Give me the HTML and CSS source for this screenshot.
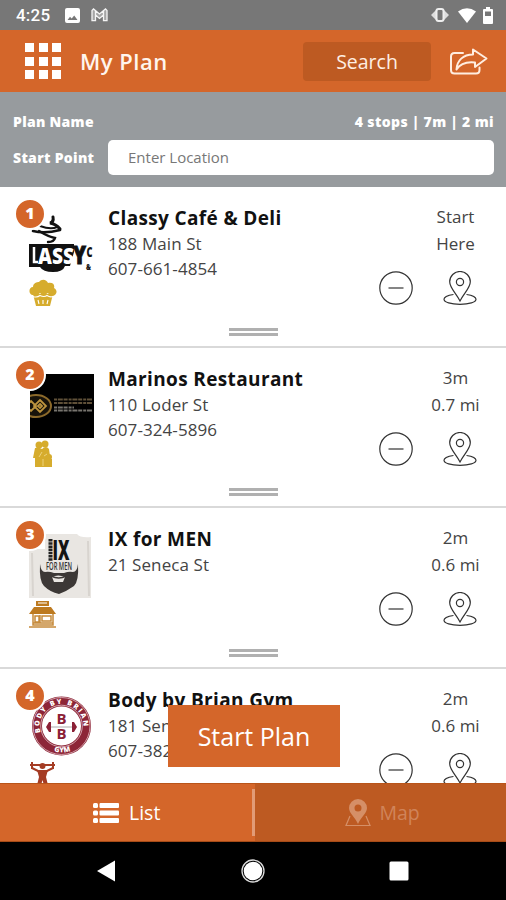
FILE: index.html
```html
<!DOCTYPE html>
<html lang="en">
<head>
<meta charset="utf-8">
<title>My Plan</title>
<link rel="stylesheet" href="styles.css">
</head>
<body>
<svg class="defs" aria-hidden="true">
  <symbol id="minus" viewBox="0 0 34 34"><circle cx="17" cy="17" r="16.2"/><path d="M9.500 17h15"/></symbol>
  <symbol id="pin" viewBox="0 0 34 34"><path d="M17 30C13 22 6.700 17 6.700 10.800a10.300 10.300 0 0 1 20.600 0C27.300 17 21 22 17 30z"/><circle cx="17" cy="11" r="3.600"/><path d="M10.500 23.500C4 24.200 1 26.500 1 28.300c0 3 7 5 16 5s16-2 16-5c0-1.800-3-4.100-9.500-4.800"/></symbol>
</svg>
<div class="screen">
  <div class="status">
    <span class="clock">4:25</span>
    <svg class="s-photo" viewBox="0 0 15 15"><path fill="#fff" fill-rule="evenodd" d="M2 0h11a2 2 0 0 1 2 2v11a2 2 0 0 1-2 2H2a2 2 0 0 1-2-2V2a2 2 0 0 1 2-2zM2.500 12h10L9.200 7.500 6.700 10.500 5 8.700z"/></svg>
    <svg class="s-mail" viewBox="0 0 17 14"><path d="M1 12.700V2.500L2.500 1 8.500 6 14.500 1 16 2.500v10.200h-3.500V7L8.500 10.500 4.500 7v5.700zM4.500 7V3M12.500 7V3" fill="#a5a5a5" stroke="#f4f4f4" stroke-width="1.300"/></svg>
    <span class="grow"></span>
    <svg class="s-vib" viewBox="0 0 18 14"><path d="M0 7l5-5v10zM18 7l-5-5v10z" fill="#ddd"/><rect x="5.500" y="1" width="7" height="12" rx="2" fill="#777" stroke="#eee" stroke-width="2"/></svg>
    <svg class="s-wifi" viewBox="0 0 18 15"><path fill="#fff" d="M0 3.500Q9-3 18 3.500L9 15z"/></svg>
    <svg class="s-bat" viewBox="0 0 10 17"><path fill="#fff" fill-rule="evenodd" d="M3 0h4v2h2q1 0 1 1v13q0 1-1 1H1q-1 0-1-1V3q0-1 1-1h2zM2 4.500v4.500h6V4.500z"/></svg>
  </div>

  <header class="header">
    <div class="grid-icon"><i></i><i></i><i></i><i></i><i></i><i></i><i></i><i></i><i></i></div>
    <h1>My Plan</h1>
    <button class="search">Search</button>
    <svg class="share" viewBox="0 0 38 27"><g fill="none" stroke="#ffede0" stroke-width="2" stroke-linejoin="round" stroke-linecap="round"><path d="M13 5H4.500Q1 5 1 8.500V22q0 3.500 3.500 3.500H26q3.500 0 3.500-3.500v-2.500"/><path d="M23 1.500L36.500 10.500 25 19V14.500C16 13.500 10 16 6.500 21.500 7 12.500 13 6.500 23 6.500z"/></g></svg>
  </header>

  <section class="plan">
    <div class="plan-row"><span>Plan Name</span><span class="totals">4 stops | 7m | 2 mi</span></div>
    <div class="plan-row start"><span class="label">Start Point</span><div class="field">Enter Location</div></div>
  </section>

  <main class="list">
    <article class="card">
      <div class="media">
        <svg class="thumb" viewBox="0 0 65 65"><g fill="none" stroke="#111" stroke-linecap="round"><path d="M4 18Q16 21 31 17" stroke-width="2.600"/><path d="M10 18Q20 24 26 25 25 29 19 29" stroke-width="2.400"/><path d="M11 13Q22 17 28 14" stroke-width="2"/><path d="M31 16Q27 11 21 10 25 9 24 4" stroke-width="3"/></g><path d="M0 31h45v8l-4 14h-5q-2 6-12 6t-13-5H0z" fill="#111"/><path d="M5 34v15h4" stroke="#fff" stroke-width="2.500" fill="none"/><g font-family="Open Sans, sans-serif" font-weight="800"><text x="9" y="51" font-size="23" fill="#fff" textLength="36" lengthAdjust="spacingAndGlyphs">ASS</text><text x="44" y="51" font-size="24" fill="#111" stroke="#111" textLength="13" lengthAdjust="spacingAndGlyphs">Y</text><text x="57.500" y="44" font-size="14" fill="#111" textLength="6" lengthAdjust="spacingAndGlyphs">C</text><text x="57" y="57" font-size="9" fill="#111" textLength="5" lengthAdjust="spacingAndGlyphs">&amp;</text></g></svg>
        <svg class="cat" viewBox="0 0 28 28"><path fill="#d6ac2d" d="M3 16C-1 14 0 8 4 8c0-4 4-5 6-5 3-4 8-2 9 1 5-1 7 2 6 5 4 2 3 7-1 8-3-1-4-1-5-3-3 2-6 2-8 0-3 3-5 2-8 2z"/><path fill="#d6ac2d" d="M4 15h20l-3 12H7z"/><path d="M4 17.500q4 1.500 7-1 4 2 7 0 3 2 6 1M9 21l1 4M14 21v4M19 21l-1 4" stroke="#fff" stroke-width="1.100" fill="none"/></svg>
        <span class="badge">1</span>
      </div>
      <div class="info"><h2>Classy Café &amp; Deli</h2><p>188 Main St</p><p>607-661-4854</p></div>
      <div class="side"><p>Start</p><p>Here</p><div class="acts"><svg><use href="#minus"/></svg><svg><use href="#pin"/></svg></div></div>
      <div class="handle"></div>
    </article>

    <article class="card">
      <div class="media">
        <svg class="thumb" viewBox="0 0 65 65"><path d="M1 0h64v64H1z" fill="#000"/><svg x="1" y="0" width="64" height="64"><ellipse cx="6" cy="32" rx="15" ry="11" fill="#18130a" stroke="#8b692a" stroke-width="2"/><g fill="none" stroke="#bd943e" stroke-width="1.800"><path d="M1 27l5 5-5 5-5-5zM10 26l6 6-6 6-6-6zM10 30l2 2-2 2-2-2z"/></g></svg><g stroke-width="1.800" stroke-dasharray="3 .8 5 .8 4 1"><path d="M25 25.500h38M25 29h38" stroke="#5f5038"/><path d="M25 33.500h20M25 36.500h38" stroke="#77746e"/></g></svg>
        <svg class="cat" viewBox="0 0 28 28"><g fill="#d6ac2d"><circle cx="10" cy="5" r="3.500"/><circle cx="16" cy="4" r="3.500"/><path d="M6 8q4-1 7 1 4-4 7 0l1 7h-3v11H6V18H4z"/><circle cx="20" cy="17" r="3"/><path d="M17 19h6v8h-6z"/></g><path d="M13 12l-3 5M14 19v7M18 14l-3 2" stroke="#f3dc91" fill="none" stroke-width=".8"/></svg>
        <span class="badge">2</span>
      </div>
      <div class="info"><h2>Marinos Restaurant</h2><p>110 Loder St</p><p>607-324-5896</p></div>
      <div class="side"><p>3m</p><p>0.7 mi</p><div class="acts"><svg><use href="#minus"/></svg><svg><use href="#pin"/></svg></div></div>
      <div class="handle"></div>
    </article>

    <article class="card">
      <div class="media">
        <svg class="thumb" viewBox="0 0 65 65"><path d="M0 15H16V0H48Q51 4 62 3L62 64H0z" fill="#e9e6e2"/><path d="M59 7l1 55M3 19l1 43" stroke="#d8d4cf" stroke-width="2"/><text x="23.500" y="26" textLength="17" lengthAdjust="spacingAndGlyphs" font-family="Open Sans, sans-serif" font-weight="800" font-size="28" fill="#141414">IX</text><path d="M21.500 5v22" stroke="#222" stroke-width="4" stroke-dasharray="2.500 .7"/><text x="17" y="36" textLength="26" lengthAdjust="spacingAndGlyphs" font-family="Open Sans, sans-serif" font-weight="600" font-size="10" fill="#333">FOR MEN</text><path fill="#3c3836" fill-rule="evenodd" d="M11 30q1 8 5 8 4-1 9 1l5 0 5 0q5-2 9-1 4 0 5-8 1 17-4 22-7 5-15 8-9-2-15-8-5-5-4-22zM23 43q6-3 13 0l-2 5h-9z"/><path d="M22 42q8 4 15 0" stroke="#3c3836" stroke-width="1.500" fill="none"/></svg>
        <svg class="cat" viewBox="0 0 28 28"><path d="M7 1h13v5H7z" fill="#bd7a20"/><path d="M9 3h9" stroke="#fff"/><path d="M5 7h17l5 7H0z" fill="#bd7a20"/><path d="M4 14v11h20V14M0 27h27M4 23h20M11 15v8M6 16h4v6H6zM13 16h9v5h-9z" fill="none" stroke="#c68b3b" stroke-width="1.500"/></svg>
        <span class="badge">3</span>
      </div>
      <div class="info"><h2>IX for MEN</h2><p>21 Seneca St</p></div>
      <div class="side"><p>2m</p><p>0.6 mi</p><div class="acts"><svg><use href="#minus"/></svg><svg><use href="#pin"/></svg></div></div>
      <div class="handle"></div>
    </article>

    <article class="card">
      <div class="media">
        <svg class="thumb" viewBox="0 0 65 65"><defs><path id="arc" d="M11.500 37.500A22 22 0 1 1 53.500 37.500"/><path id="arc2" d="M17 52.500A27.500 27.500 0 0 0 48 52.500"/></defs><circle cx="32.500" cy="31" r="24.500" fill="#fff" stroke="#8d2638" stroke-width="10"/><circle cx="32.500" cy="31" r="28.500" fill="none" stroke="#e2bec3" stroke-width=".8"/><circle cx="32.500" cy="31" r="20.800" fill="none" stroke="#e3c2c8" stroke-width=".8"/><g font-family="Open Sans, sans-serif" font-weight="800" fill="#fff" font-size="7"><text><textPath href="#arc" textLength="76">BODY BY BRIAN</textPath></text><text><textPath href="#arc2" startOffset="9">GYM</textPath></text></g><g font-family="Open Sans, sans-serif" font-weight="700" fill="#8b2036" font-size="15"><text x="27.500" y="29">B</text><text x="27.500" y="44">B</text></g><path d="M22 32h22" stroke="#aaa"/><path d="M17 32l3-5h2v10h-2zM48 32l-3-5h-2v10h2z" fill="#8b2036"/></svg>
        <svg class="cat" viewBox="0 0 28 28"><g fill="none" stroke="#a53c24" stroke-width="2"><path d="M1 4h25M3 1v7M24 1v7"/><path d="M3 7l6 3h9l6-3"/></g><circle cx="13.500" cy="5" r="3" fill="#a53c24"/><path d="M8 9h11l-2 7 3 12h-4l-2.500-9L11 28H7l3-12z" fill="#a53c24"/></svg>
        <span class="badge">4</span>
      </div>
      <div class="info"><h2>Body by Brian Gym</h2><p>181 Seneca St</p><p>607-382-4960</p></div>
      <div class="side"><p>2m</p><p>0.6 mi</p><div class="acts"><svg><use href="#minus"/></svg><svg><use href="#pin"/></svg></div></div>
      <div class="handle"></div>
    </article>
    <button class="start-plan">Start Plan</button>
  </main>

  <nav class="tabs">
    <div class="tab list-tab"><svg class="list-icon" viewBox="0 0 26 20"><g fill="#fff"><rect width="5" height="5" rx="1.500"/><rect y="7.500" width="5" height="5" rx="1.500"/><rect y="15" width="5" height="5" rx="1.500"/><rect x="6.500" width="19.500" height="5" rx="1"/><rect x="6.500" y="7.500" width="19.500" height="5" rx="1"/><rect x="6.500" y="15" width="19.500" height="5" rx="1"/></g></svg><span>List</span></div>
    <div class="tab map-tab"><svg class="map-icon" viewBox="0 0 26 28"><path fill="#d58f67" fill-rule="evenodd" d="M13 25C10 18 4 14 4 9a9 9 0 0 1 18 0c0 5-6 9-9 16zM13 5.500a3.500 3.500 0 1 0 0 7 3.500 3.500 0 0 0 0-7z"/><path d="M5 17L1 26.500h24L21 17" fill="none" stroke="#d58f67" stroke-width="1.200"/></svg><span>Map</span></div>
    <i class="divider"></i>
  </nav>
  <div class="sysnav">
    <svg viewBox="0 0 24 24"><path d="M3 12L21 1.500v21z" fill="#fff"/></svg>
    <svg viewBox="0 0 24 24"><circle cx="12" cy="12" r="11" fill="none" stroke="#ddd" stroke-width="1.300"/><circle cx="12" cy="12" r="9.300" fill="#fff"/></svg>
    <svg viewBox="0 0 24 24"><rect x="2.500" y="2.500" width="19" height="19" rx="1.500" fill="#fff"/></svg>
  </div>
</div>
</body>
</html>
```
FILE: styles.css
```css
* { box-sizing: border-box; }
body { margin: 0; font-family: "Open Sans", "Noto Sans", sans-serif; color: #444; background: #fff; }
h1, h2, p { margin: 0; }
svg { display: block; flex: none; }
button { border: 0; padding: 0; font: inherit; }
.defs { position: absolute; width: 0; height: 0; }
.screen { width: 506px; height: 900px; display: flex; flex-direction: column; overflow: hidden; }

.status { height: 30px; flex: none; background: #777; display: flex; align-items: center; padding: 0 13px 0 16px; }
.clock { font: 500 17px/30px Roboto, sans-serif; color: #fff; letter-spacing: .2px; width: 49px; }
.s-photo { width: 15px; height: 15px; margin-right: 11px; }
.s-mail { width: 17px; height: 14px; }
.grow { flex: 1; }
.s-vib { width: 18px; height: 14px; margin-right: 9px; }
.s-wifi { width: 18px; height: 15px; margin-right: 7px; }
.s-bat { width: 10px; height: 17px; }

.header { height: 62px; flex: none; background: #d4662a; display: flex; align-items: center; padding: 0 18px 0 25px; }
.grid-icon { display: grid; grid-template-columns: repeat(3, 9px); gap: 4.500px; grid-auto-rows: 9px; width: 36px; }
.grid-icon i { background: #fff; }
.header h1 { flex: 1; margin-left: 19px; font-size: 22px; font-weight: 600; color: #fff5ed; letter-spacing: .5px; }
.search { width: 128px; height: 39px; border-radius: 4px; background: #bd5a22; color: #ffeee2; font-size: 19.500px; margin-right: 19px; }
.share { width: 38px; height: 27px; }

.plan { height: 95px; flex: none; background: #979b9e; color: #fff; font-weight: 800; font-size: 14px; letter-spacing: .3px; padding: 17px 12px 0 13px; }
.plan-row { display: flex; justify-content: space-between; align-items: center; height: 24px; }
.totals { letter-spacing: .38px; }
.start { height: 35px; margin-top: 7px; }
.label { width: 95px; }
.field { flex: 1; height: 35px; border-radius: 5px; background: #fff; color: #777; font-weight: 400; font-size: 15px; letter-spacing: 0; line-height: 34px; padding-left: 20px; }

.list { flex: 1; min-height: 0; overflow: hidden; position: relative; }
.card { height: 160.600px; border-bottom: 2px solid #d9d9d9; display: grid; grid-template-columns: 108px 1fr 146px; grid-template-rows: 140.500px 8px; }
.media { position: relative; padding: 26px 0 0 29px; }
.thumb { width: 65px; height: 65px; overflow: visible; }
.cat { width: 28px; height: 28px; margin-top: 1px; }
.badge { position: absolute; left: 14px; top: 11px; width: 32px; height: 32px; border-radius: 50%; border: 2px solid #fff; background: #d4662a; color: #fff; font-size: 16px; font-weight: 800; line-height: 27px; text-align: center; }
.info { padding-top: 18px; font-size: 17px; line-height: 25px; white-space: nowrap; letter-spacing: .08px; }
.info h2 { font-size: 19px; line-height: 26px; font-weight: 700; color: #111; letter-spacing: .36px; }
.side { padding-top: 16px; font-size: 17px; line-height: 27px; }
.side p { margin-left: 45px; text-align: center; width: 101px; }
.acts { display: flex; gap: 30px; margin: 14px 0 0 19px; }
.acts svg { width: 34px; height: 34px; fill: none; stroke: #333; stroke-width: 1.200; }
.handle { grid-column: 1 / -1; justify-self: center; width: 49px; height: 8px; border-top: 3px solid #b0b0b0; border-bottom: 3px solid #b0b0b0; }
.start-plan { position: absolute; left: 168px; top: 518px; width: 172px; height: 62px; background: #d4662a; color: #fff; font-size: 25px; }

.tabs { height: 59px; flex: none; display: flex; position: relative; border-top: 1px solid #b95419; border-bottom: 1px solid #a64b17; }
.tab { flex: 1; display: flex; align-items: center; font-size: 19.500px; color: #fff; }
.list-tab { background: #d4662a; padding-left: 93px; gap: 10px; }
.map-tab { background: #bd5a22; color: #d0845a; padding-left: 90px; gap: 9px; }
.list-icon { width: 26px; height: 20px; }
.map-icon { width: 26px; height: 28px; }
.divider { position: absolute; left: 252px; top: 5px; width: 3px; height: 47px; background: #e29b76; }
.sysnav { height: 58px; flex: none; background: #000; display: flex; align-items: center; justify-content: space-between; padding: 0 95px 0 94px; }
.sysnav svg { width: 24px; height: 24px; }
```
